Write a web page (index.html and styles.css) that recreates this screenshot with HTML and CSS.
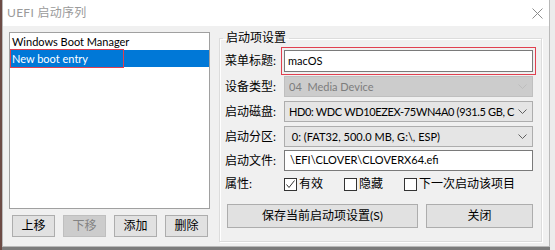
FILE: index.html
```html
<!DOCTYPE html>
<html lang="zh-CN">
<head>
    <meta charset="UTF-8">
    <meta name="viewport" content="width=device-width, initial-scale=1.0">
    <title>UEFI 启动序列</title>
    <link rel="stylesheet" href="styles.css">
</head>
<body>
    <div class="window">
        <div class="titlebar">
            <span class="title">UEFI 启动序列</span>
            <svg class="close" width="11" height="11" viewBox="0 0 11 11">
                <path d="M0.5 0.5 L10.5 10.5 M10.5 0.5 L0.5 10.5" stroke="#8c8c8c" stroke-width="1" fill="none"/>
            </svg>
        </div>
        <div class="client">
            <div class="leftPane">
                <ul class="bootList latin">
                    <li>Windows Boot Manager</li>
                    <li class="selected"><span class="marked">New boot entry</span></li>
                </ul>
                <div class="listButtons">
                    <button class="btn small">上移</button>
                    <button class="btn small" disabled>下移</button>
                    <button class="btn small">添加</button>
                    <button class="btn small">删除</button>
                </div>
            </div>

            <fieldset class="group">
                <legend>启动项设置</legend>

                <div class="row rowTitle">
                    <span class="label">菜单标题:</span>
                    <div class="textBox markedBox latin">macOS</div>
                </div>
                <div class="row rowCombo">
                    <span class="label">设备类型:</span>
                    <div class="combo disabled">
                        <span class="comboText latin">04&nbsp; Media Device</span>
                        <svg class="chevron" width="9" height="5" viewBox="0 0 9 5"><path d="M0.5 0.5 L4.5 4.5 L8.5 0.5" stroke="#bdbdbd" fill="none"/></svg>
                    </div>
                </div>
                <div class="row rowCombo">
                    <span class="label">启动磁盘:</span>
                    <div class="combo">
                        <span class="comboText latin tight">HD0: WDC WD10EZEX-75WN4A0 (931.5 GB, C</span>
                        <svg class="chevron" width="9" height="5" viewBox="0 0 9 5"><path d="M0.5 0.5 L4.5 4.5 L8.5 0.5" stroke="#606060" fill="none"/></svg>
                    </div>
                </div>
                <div class="row rowCombo">
                    <span class="label">启动分区:</span>
                    <div class="combo">
                        <span class="comboText latin">&nbsp;0: (FAT32, 500.0 MB, G:\, ESP)</span>
                        <svg class="chevron" width="9" height="5" viewBox="0 0 9 5"><path d="M0.5 0.5 L4.5 4.5 L8.5 0.5" stroke="#606060" fill="none"/></svg>
                    </div>
                </div>
                <div class="row rowFile">
                    <span class="label">启动文件:</span>
                    <div class="textBox latin">\EFI\CLOVER\CLOVERX64.efi</div>
                </div>
                <div class="row rowChecks">
                    <span class="label">属性:</span>
                    <span class="check">
                        <span class="box"><svg width="11" height="11" viewBox="0 0 11 11"><path d="M1.5 5.5 L4 8.5 L9.5 1.5" stroke="#333" fill="none"/></svg></span>有效
                    </span>
                    <span class="check"><span class="box"></span>隐藏</span>
                    <span class="check"><span class="box"></span>下一次启动该项目</span>
                </div>
                <div class="row rowButtons">
                    <button class="btn save">保存当前启动项设置(S)</button>
                    <button class="btn closeBtn">关闭</button>
                </div>
            </fieldset>
        </div>
    </div>
</body>
</html>
```

FILE: styles.css
```css
*{
    box-sizing: border-box;
}
body{
    margin: 0;
    width: 555px;
    height: 250px;
    overflow: hidden;
    background: linear-gradient(to right, #6c4b45 2px, transparent 2px, transparent 550px, #ececec 550px), #7c7c7c;
    font-family: Lato, "Noto Sans CJK SC", sans-serif;
    font-size: 12px;
    color: #000;
}
.latin{
    font-size: 11px;
}
.tight{
    letter-spacing: -0.35px;
}
.window{
    margin-left: 2px;
    width: 548px;
    height: 247px;
    background-color: #f0f0f0;
    border: 1px solid #b9b9b9;
    border-top: none;
    display: flex;
    flex-direction: column;
}
.titlebar{
    height: 26px;
    background-color: #fff;
    display: flex;
    align-items: center;
    justify-content: space-between;
    padding: 0 6px 0 4px;
}
.title{
    color: #9a9a9a;
    font-size: 12px;
    line-height: 16px;
    letter-spacing: 0.3px;
}
.close{
    margin-top: 1px;
}
.client{
    flex: 1;
    display: flex;
    padding: 6px 0 0 6px;
}
.leftPane{
    width: 201px;
}
.bootList{
    list-style: none;
    margin: 0;
    padding: 0;
    height: 177px;
    background-color: #fff;
    border: 1px solid #a0a0a0;
}
.bootList li{
    height: 17px;
    line-height: 17px;
    padding-left: 2px;
    white-space: nowrap;
}
.bootList li.selected{
    background-color: #0078d7;
    color: #fff;
}
.marked{
    display: inline-block;
    height: 19px;
    width: 114px;
    margin-left: -2px;
    margin-top: -1px;
    padding-left: 1px;
    line-height: 17px;
    border: 1px solid #e04050;
}
.listButtons{
    display: flex;
    gap: 8px;
    padding-left: 3px;
    margin-top: 6px;
}
.btn{
    font-family: Lato, "Noto Sans CJK SC", sans-serif;
    font-size: 12px;
    color: #000;
    background-color: #e1e1e1;
    border: 1px solid #adadad;
    padding: 0;
    margin: 0;
    line-height: 16px;
}
.btn:disabled{
    background-color: #cccccc;
    border-color: #bfbfbf;
    color: #838383;
}
.small{
    width: 43px;
    height: 22px;
}
.group{
    margin: -2px 0 0 9px;
    padding: 0 0 0 5px;
    width: 323px;
    height: 212px;
    border: 1px solid #dcdcdc;
    box-shadow: 1px 1px 0 #fff inset, 1px 1px 0 #fff;
}
.group legend{
    padding: 0 3px;
    margin-left: -2px;
    line-height: 16px;
    font-size: 12px;
}
.row{
    display: flex;
    align-items: center;
}
.label{
    width: 59px;
    flex: none;
    line-height: 16px;
    white-space: nowrap;
}
.textBox{
    width: 249px;
    background-color: #fff;
    border: 1px solid #7a7a7a;
    padding-left: 3px;
    line-height: 16px;
    white-space: nowrap;
    overflow: hidden;
}
.rowTitle{
    margin-top: 4px;
}
.rowTitle .textBox{
    height: 22px;
    padding-top: 2px;
}
.markedBox{
    outline: 1px solid #e04050;
    outline-offset: 2px;
}
.rowCombo{
    margin-top: 4px;
}
.combo{
    width: 249px;
    height: 21px;
    background-color: #e5e5e5;
    border: 1px solid #adadad;
    display: flex;
    align-items: center;
    padding: 0 5px 0 4px;
}
.combo.disabled{
    background-color: #cccccc;
    border-color: #bfbfbf;
    color: #7d7d7d;
}
.comboText{
    flex: 1;
    white-space: nowrap;
    overflow: hidden;
    line-height: 16px;
}
.chevron{
    flex: none;
    margin-left: 3px;
}
.rowFile{
    margin-top: 3px;
}
.rowFile .textBox{
    height: 21px;
    padding-top: 1px;
    padding-left: 5px;
}
.rowChecks{
    margin-top: 6px;
    height: 14px;
}
.check{
    display: flex;
    align-items: center;
    line-height: 16px;
    margin-right: 21px;
}
.check:first-of-type{
    margin-left: 1px;
}
.box{
    width: 13px;
    height: 13px;
    border: 1px solid #333;
    background-color: #fff;
    margin-right: 2px;
    display: flex;
    align-items: center;
    justify-content: center;
}
.rowButtons{
    margin-top: 13px;
    gap: 8px;
    padding-left: 2px;
}
.save{
    width: 191px;
    height: 24px;
}
.closeBtn{
    width: 107px;
    height: 24px;
}
```
